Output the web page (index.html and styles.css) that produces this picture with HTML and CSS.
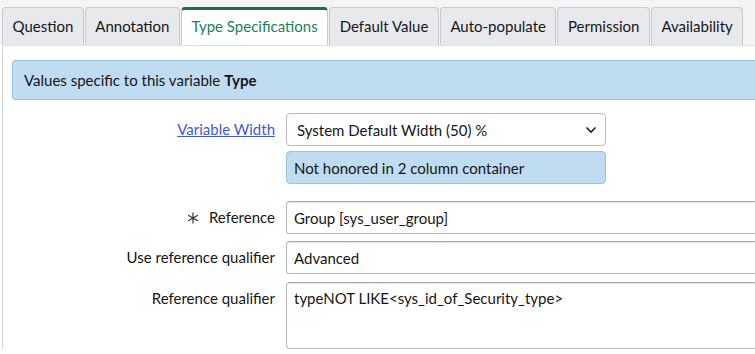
FILE: index.html
```html
<!doctype html>
<html lang="en">

<head>
  <meta charset="UTF-8">
  <title>Type Specifications</title>
  <link rel="stylesheet" href="styles.css">
</head>

<body>
  <nav class="tabs">
    <span class="tab">Question</span>
    <span class="tab">Annotation</span>
    <span class="tab active">Type Specifications</span>
    <span class="tab">Default Value</span>
    <span class="tab">Auto-populate</span>
    <span class="tab">Permission</span>
    <span class="tab">Availability</span>
  </nav>

  <section class="panel">
    <div class="info">Values specific to this variable <b>Type</b></div>

    <div class="row row-width">
      <label class="label"><a href="#">Variable Width</a></label>
      <div class="field">
        <div class="select narrow">
          <span>System Default Width (50) %</span>
          <svg width="12" height="8" viewBox="0 0 12 8"><path d="M1.5 1.5 L6 6 L10.5 1.5" fill="none" stroke="#222" stroke-width="1.6"/></svg>
        </div>
        <div class="note">Not honored in 2 column container</div>
      </div>
    </div>

    <div class="row row-ref">
      <label class="label">
        <svg class="mandatory" width="12" height="12" viewBox="0 0 12 12">
          <path d="M6 0.5 V11.5 M1.2 3.2 L10.8 8.8 M1.2 8.8 L10.8 3.2" stroke="#333" stroke-width="1.2" fill="none"/>
        </svg>
        Reference
      </label>
      <div class="field"><div class="input">Group [sys_user_group]</div></div>
    </div>

    <div class="row row-use">
      <label class="label">Use reference qualifier</label>
      <div class="field"><div class="input">Advanced</div></div>
    </div>

    <div class="row row-qual">
      <label class="label">Reference qualifier</label>
      <div class="field"><div class="input textarea">typeNOT LIKE&lt;sys_id_of_Security_type&gt;</div></div>
    </div>
  </section>
</body>
</html>
```

FILE: styles.css
```css
body {
  margin: 0;
  background: #ffffff;
  font-family: Lato, "Open Sans", sans-serif;
  font-size: 15px;
  color: #161616;
  overflow: hidden;
}

.tabs {
  display: flex;
  align-items: flex-end;
  padding: 7px 0 0 2px;
  background: #f4f4f5;
  height: 38px;
}

.tab {
  box-sizing: border-box;
  height: 38px;
  padding: 0 9.5px 1px;
  margin-right: 1px;
  display: flex;
  align-items: center;
  background: #e8e9ec;
  border: 1px solid #c9cacd;
  border-bottom: none;
  border-radius: 4px 4px 0 0;
  white-space: nowrap;
}

.tab.active {
  background: #ffffff;
  color: #1a7f5c;
  border-top: 3px solid #1b6e4f;
  padding-bottom: 3px;
}

.panel {
  border-left: 1px solid #d4d5d8;
  margin-left: 2px;
  border-top: 1px solid #e0e1e4;
  padding: 14px 0 0 9px;
}

.info {
  background: #bfdcf1;
  border: 1px solid #92c5ea;
  border-right: none;
  border-radius: 4px 0 0 4px;
  height: 38px;
  display: flex;
  align-items: center;
  padding-left: 11px;
}

.info b {
  margin-left: 4px;
}

.row {
  display: grid;
  grid-template-columns: 263px 1fr;
  column-gap: 11px;
}

.label {
  text-align: right;
  height: 33px;
  line-height: 33px;
  white-space: nowrap;
}

.label a {
  color: #4159dd;
}

.mandatory {
  margin-right: 6px;
  vertical-align: -1px;
}

.row-width {
  margin-top: 13px;
}

.row-ref {
  margin-top: 17px;
}

.row-use {
  margin-top: 7px;
}

.row-qual {
  margin-top: 8px;
}

.select,
.input {
  box-sizing: border-box;
  height: 33px;
  border: 1px solid #b9babd;
  background: #ffffff;
  display: flex;
  align-items: center;
  padding-left: 10px;
  white-space: nowrap;
}

.select {
  justify-content: space-between;
  padding-right: 8px;
  border-radius: 4px;
  width: 320px;
}

.input {
  border-radius: 4px 0 0 4px;
  border-right: none;
  border-top-color: #a8a9ad;
  box-shadow: inset 0 1px 1px #e4e5e8;
  padding-left: 7px;
}

.textarea {
  height: 67px;
  align-items: flex-start;
  padding-top: 6px;
}

.note {
  box-sizing: border-box;
  width: 320px;
  height: 33px;
  margin-top: 5px;
  background: #bfdcf1;
  border: 1px solid #92c5ea;
  border-radius: 4px;
  display: flex;
  align-items: center;
  padding-left: 7px;
}
```
